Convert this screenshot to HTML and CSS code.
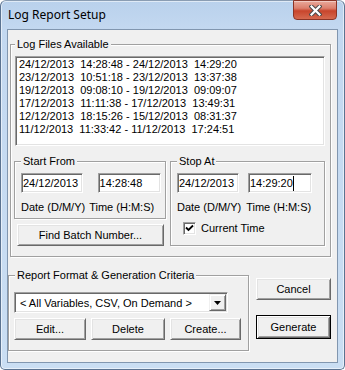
FILE: index.html
```html
<!DOCTYPE html>
<html lang="en">

<head>
    <meta charset="UTF-8">
    <meta name="viewport" content="width=device-width, initial-scale=1.0">
    <title>Log Report Setup</title>
    <link rel="stylesheet" href="styles.css">
</head>

<body>
    <div class="window">
        <div class="titlebar">
            <span class="title">Log Report Setup</span>
            <button class="close-btn" aria-label="Close">
                <svg width="13" height="11" viewBox="0 0 13 11">
                    <path d="M2.5 1.5 L10.5 9.5 M10.5 1.5 L2.5 9.5" stroke="#4a4a4a" stroke-width="4.2" stroke-linecap="square" fill="none" />
                    <path d="M2.5 1.5 L10.5 9.5 M10.5 1.5 L2.5 9.5" stroke="#ffffff" stroke-width="2.2" stroke-linecap="square" fill="none" />
                </svg>
            </button>
        </div>

        <div class="client">
            <!-- Log files -->
            <fieldset class="group files-group">
                <legend>Log Files Available</legend>
                <ul class="listbox">
                    <li>24/12/2013  14:28:48 - 24/12/2013  14:29:20</li>
                    <li>23/12/2013  10:51:18 - 23/12/2013  13:37:38</li>
                    <li>19/12/2013  09:08:10 - 19/12/2013  09:09:07</li>
                    <li>17/12/2013  11:11:38 - 17/12/2013  13:49:31</li>
                    <li>12/12/2013  18:15:26 - 15/12/2013  08:31:37</li>
                    <li>11/12/2013  11:33:42 - 11/12/2013  17:24:51</li>
                </ul>

                <div class="range-row">
                    <div class="range-col">
                        <fieldset class="group start-group">
                            <legend>Start From</legend>
                            <div class="field-row start-fields">
                                <div class="field date-field">24/12/2013</div>
                                <div class="field time-field">14:28:48</div>
                            </div>
                            <div class="caption-row start-captions">
                                <span>Date (D/M/Y)</span>
                                <span>Time (H:M:S)</span>
                            </div>
                        </fieldset>
                        <button class="btn batch-btn">Find Batch Number...</button>
                    </div>

                    <fieldset class="group stop-group">
                        <legend>Stop At</legend>
                        <div class="field-row stop-fields">
                            <div class="field date-field">24/12/2013</div>
                            <div class="field time-field">14:29:20<span class="caret"></span></div>
                        </div>
                        <div class="caption-row stop-captions">
                            <span>Date (D/M/Y)</span>
                            <span>Time (H:M:S)</span>
                        </div>
                        <div class="check-row">
                            <span class="checkbox">
                                <svg width="9" height="9" viewBox="0 0 9 9">
                                    <polyline points="1,3.5 3.5,6 8,1.5" stroke="#000" stroke-width="1.8" fill="none" />
                                </svg>
                            </span>
                            <span>Current Time</span>
                        </div>
                    </fieldset>
                </div>
            </fieldset>

            <!-- Report format -->
            <div class="bottom-row">
                <fieldset class="group report-group">
                    <legend>Report Format &amp; Generation Criteria</legend>
                    <div class="combo">
                        <span class="combo-text">&lt; All Variables, CSV, On Demand &gt;</span>
                        <span class="combo-arrow">
                            <svg width="7" height="4" viewBox="0 0 7 4">
                                <polygon points="0,0 7,0 3.5,4" fill="#000" />
                            </svg>
                        </span>
                    </div>
                    <div class="btn-row">
                        <button class="btn edit-btn">Edit...</button>
                        <button class="btn delete-btn">Delete</button>
                        <button class="btn create-btn">Create...</button>
                    </div>
                </fieldset>

                <div class="side-buttons">
                    <button class="btn side-btn">Cancel</button>
                    <button class="btn side-btn default-btn">Generate</button>
                </div>
            </div>
        </div>
    </div>
</body>

</html>
```

FILE: styles.css
```css
body {
    margin: 0;
    font-family: "Liberation Sans", Arial, sans-serif;
    font-size: 11px;
    color: #000;
    background: #ffffff;
}

.window {
    width: 345px;
    height: 370px;
    box-sizing: border-box;
    display: flex;
    flex-direction: column;
    padding: 0 6px 6px 6px;
    border: 1px solid #5b7391;
    border-top-color: #8a9db3;
    border-radius: 6px 6px 5px 5px;
    background: linear-gradient(to bottom, #b9d1ec 0, #c3d8f0 28px, #cadef3 100%);
    box-shadow: inset 0 0 0 1px rgba(255, 255, 255, 0.55);
}

/* Title bar */
.titlebar {
    height: 28px;
    display: flex;
    justify-content: space-between;
    align-items: flex-start;
    margin: 0 -6px 0 -6px;
    padding-left: 7px;
}

.title {
    font-family: "Noto Sans", "Open Sans", sans-serif;
    font-size: 12px;
    line-height: 28px;
    color: #000;
}

.close-btn {
    width: 44px;
    height: 20px;
    margin: -1px 7px 0 0;
    padding: 0;
    display: flex;
    align-items: center;
    justify-content: center;
    border: 1px solid #8b3426;
    border-radius: 0 0 4px 4px;
    background: linear-gradient(to bottom, #e9a99b 0, #dc7f6d 40%, #c8452c 55%, #d56a50 100%);
    box-shadow: inset 0 1px 0 rgba(255, 255, 255, 0.4);
}

/* Client area */
.client {
    flex: 1;
    background: #f0f0f0;
    border: 1px solid #8196af;
    display: flex;
    flex-direction: column;
}

/* Etched group boxes */
.group {
    margin: 0;
    padding: 0;
    min-width: 0;
    box-sizing: border-box;
    border: 1px solid #a0a0a0;
    box-shadow: 1px 1px 0 #ffffff, inset 1px 1px 0 #ffffff;
}

.group legend {
    padding: 0 2px;
    line-height: 13px;
    background: #f0f0f0;
}

.files-group {
    width: 321px;
    margin: 8px 0 0 2px;
    padding: 5px 5px 10px 4px;
}

.listbox {
    width: 310px;
    height: 90px;
    box-sizing: border-box;
    margin: 0;
    padding: 0 2px;
    list-style: none;
    background: #ffffff;
    border: 1px solid;
    border-color: #a0a0a0 #ffffff #ffffff #a0a0a0;
    box-shadow: inset 1px 1px 0 #696969, inset -1px -1px 0 #e3e3e3;
}

.listbox li {
    white-space: pre;
    line-height: 13px;
    padding-left: 1px;
}

.listbox li:first-child {
    margin-top: 1px;
}

.range-row {
    display: flex;
    gap: 4px;
    margin: 9px 0 0 -1px;
}

.range-col {
    width: 152px;
    display: flex;
    flex-direction: column;
}

.start-group {
    padding: 5px 4px 4px 6px;
}

.stop-group {
    width: 155px;
    padding: 5px 4px 4px 6px;
}

.field-row {
    display: flex;
}

.start-fields {
    gap: 15px;
}

.stop-fields {
    gap: 9px;
}

.field {
    height: 20px;
    box-sizing: border-box;
    padding-left: 1px;
    display: flex;
    align-items: center;
    white-space: nowrap;
    background: #ffffff;
    border: 1px solid;
    border-color: #a0a0a0 #ffffff #ffffff #a0a0a0;
    box-shadow: inset 1px 1px 0 #696969, inset -1px -1px 0 #e3e3e3;
}

.date-field {
    width: 62px;
}

.time-field {
    width: 64px;
}

.caret {
    width: 1px;
    height: 15px;
    background: #000;
}

.caption-row {
    display: flex;
    margin-top: 8px;
    line-height: 13px;
    white-space: nowrap;
}

.start-captions {
    gap: 4px;
}

.stop-captions {
    gap: 5px;
}

.check-row {
    display: flex;
    align-items: center;
    margin: 8px 0 0 6px;
    line-height: 13px;
}

.checkbox {
    width: 13px;
    height: 13px;
    box-sizing: border-box;
    margin-right: 5px;
    display: flex;
    align-items: center;
    justify-content: center;
    background: #ffffff;
    border: 1px solid;
    border-color: #a0a0a0 #ffffff #ffffff #a0a0a0;
    box-shadow: inset 1px 1px 0 #696969, inset -1px -1px 0 #e3e3e3;
}

/* Raised buttons */
.btn {
    height: 22px;
    box-sizing: border-box;
    padding: 0;
    font-family: "Liberation Sans", Arial, sans-serif;
    font-size: 11px;
    color: #000;
    background: #f0f0f0;
    border: 1px solid;
    border-color: #ffffff #696969 #696969 #ffffff;
    box-shadow: inset 1px 1px 0 #e3e3e3, inset -1px -1px 0 #a0a0a0;
}

.batch-btn {
    width: 147px;
    margin: 5px 0 0 3px;
}

/* Report format group */
.bottom-row {
    display: flex;
    align-items: flex-start;
    margin-top: 12px;
}

.report-group {
    width: 241px;
    padding: 10px 5px 10px 5px;
}

.report-group legend {
    margin-left: 1px;
}

.combo {
    width: 214px;
    height: 21px;
    box-sizing: border-box;
    display: flex;
    align-items: center;
    justify-content: space-between;
    padding: 1px;
    background: #ffffff;
    border: 1px solid;
    border-color: #a0a0a0 #ffffff #ffffff #a0a0a0;
    box-shadow: inset 1px 1px 0 #696969, inset -1px -1px 0 #e3e3e3;
}

.combo-text {
    padding-left: 4px;
    white-space: nowrap;
}

.combo-arrow {
    width: 17px;
    height: 17px;
    box-sizing: border-box;
    display: flex;
    align-items: center;
    justify-content: center;
    background: #f0f0f0;
    border: 1px solid;
    border-color: #f0f0f0 #696969 #696969 #f0f0f0;
    box-shadow: inset 1px 1px 0 #ffffff, inset -1px -1px 0 #a0a0a0;
}

.btn-row {
    display: flex;
    gap: 5px;
    margin-top: 5px;
}

.edit-btn {
    width: 72px;
}

.delete-btn {
    width: 74px;
}

.create-btn {
    width: 71px;
}

.side-buttons {
    display: flex;
    flex-direction: column;
    margin: 9px 0 0 7px;
}

.side-btn {
    width: 75px;
}

.default-btn {
    height: 24px;
    margin-top: 15px;
    border: 1px solid #000;
    box-shadow: inset 1px 1px 0 #ffffff, inset -1px -1px 0 #696969, inset 2px 2px 0 #e3e3e3, inset -2px -2px 0 #a0a0a0;
}
```
